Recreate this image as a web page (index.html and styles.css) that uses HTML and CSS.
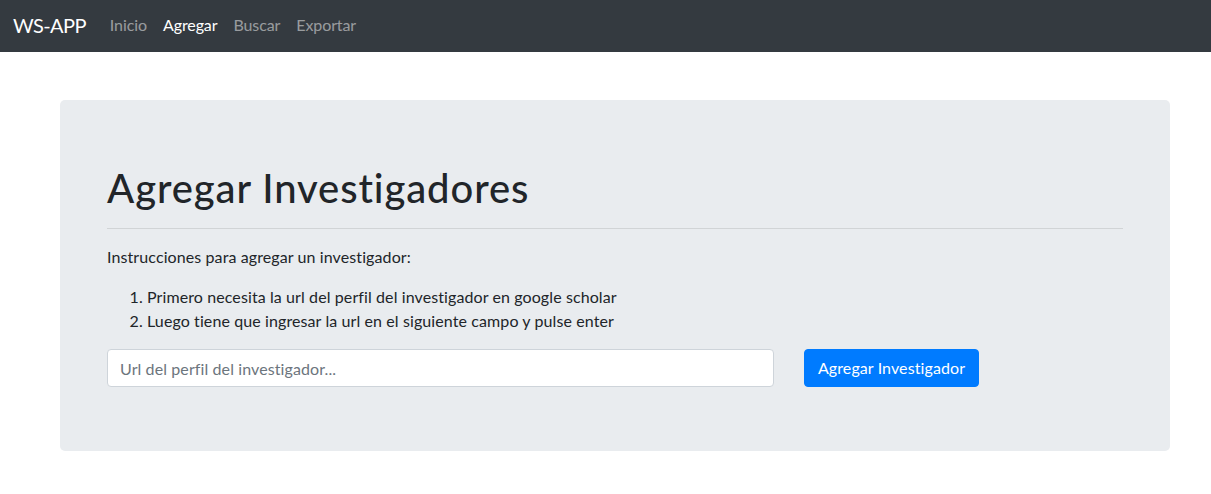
FILE: index.html
```html
<!DOCTYPE html>
<html lang="es">
<head>
<meta charset="utf-8">
<title>WS-APP</title>
<link rel="stylesheet" href="styles.css">
</head>
<body>
<nav class="navbar">
  <a class="brand" href="#">WS-APP</a>
  <ul class="nav">
    <li><a class="nav-link" href="#">Inicio</a></li>
    <li><a class="nav-link active" href="#">Agregar</a></li>
    <li><a class="nav-link" href="#">Buscar</a></li>
    <li><a class="nav-link" href="#">Exportar</a></li>
  </ul>
</nav>
<main class="page">
  <section class="jumbotron">
    <h1 class="title">Agregar Investigadores</h1>
    <hr class="divider">
    <p class="lead">Instrucciones para agregar un investigador:</p>
    <ol class="steps">
      <li>Primero necesita la url del perfil del investigador en google scholar</li>
      <li>Luego tiene que ingresar la url en el siguiente campo y pulse enter</li>
    </ol>
    <form class="add-form">
      <input class="url-input" type="text" placeholder="Url del perfil del investigador...">
      <button class="btn-primary" type="button">Agregar Investigador</button>
    </form>
  </section>
</main>
</body>
</html>
```
FILE: styles.css
```css
* { box-sizing: border-box; }
html, body { margin: 0; padding: 0; }
body {
  font-family: Lato, "Noto Sans", "Liberation Sans", sans-serif;
  font-size: 16px;
  line-height: 24px;
  letter-spacing: 0.1px;
  color: #212529;
  background: #fff;
}
.navbar {
  height: 52px;
  background: #343a40;
  display: flex;
  align-items: center;
  padding: 0 13px 2px;
}
.brand {
  font-size: 20px;
  color: #fff;
  text-decoration: none;
  margin-right: 16px;
  line-height: 30px;
  letter-spacing: -0.6px;
}
.nav {
  list-style: none;
  margin: 0;
  padding: 0;
  display: flex;
}
.nav-link {
  display: block;
  padding: 8px 8px;
  color: rgba(255,255,255,.5);
  text-decoration: none;
  letter-spacing: -0.1px;
}
.nav-link.active { color: #fff; }
.page {
  padding: 48px 0 0 60px;
}
.jumbotron {
  width: 1110px;
  background: #e9ecef;
  border-radius: 5px;
  padding: 64px 47px 64px 47px;
}
.title {
  margin: 0;
  font-size: 40px;
  line-height: 48px;
  font-weight: 500;
  letter-spacing: 0.9px;
}
.divider {
  margin: 16px 0;
  border: 0;
  border-top: 1px solid rgba(0,0,0,.1);
}
.lead { margin: 0 0 16px; }
.steps { margin: 0 0 16px; padding-left: 40px; }
.add-form {
  display: flex;
  gap: 30px;
  margin: 0;
}
.url-input {
  width: 667px;
  height: 38px;
  padding: 6px 12px;
  font: inherit;
  letter-spacing: inherit;
  color: #495057;
  background: #fff;
  border: 1px solid #ced4da;
  border-radius: 4px;
}
.url-input::placeholder { color: #6c757d; opacity: 1; }
.btn-primary {
  height: 38px;
  width: 175px;
  padding: 6px 12px;
  font: inherit;
  letter-spacing: inherit;
  color: #fff;
  background: #007bff;
  border: 1px solid #007bff;
  border-radius: 4px;
}
```
